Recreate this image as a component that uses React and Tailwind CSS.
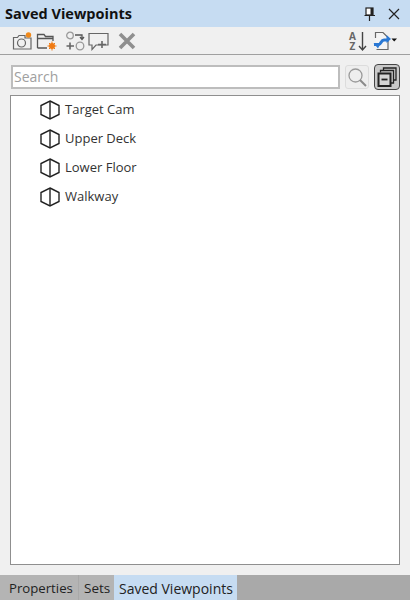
import React from "react";

const Cube = () => (
  <svg width="20" height="20" viewBox="0 0 20 20" fill="none" stroke="#222" strokeWidth="1.4" className="shrink-0">
    <path d="M10 1 L19 5.5 L19 14.5 L10 19 L1 14.5 L1 5.5 Z" strokeLinejoin="miter" />
    <path d="M10 1 V19" />
  </svg>
);

const Row = ({ label }) => (
  <div className="h-[29px] flex items-center pl-[29px] gap-[5px] text-[13px] text-[#333]">
    <Cube />
    <span>{label}</span>
  </div>
);

export default function App() {
  return (
    <div className="w-[410px] h-[600px] flex flex-col bg-[#f0f0f0] overflow-hidden" style={{ fontFamily: '"Open Sans","Noto Sans",sans-serif' }}>
      <div className="h-[27px] shrink-0 bg-[#c6dcf2] flex items-center pl-[5px] pr-[10px]">
        <span className="font-bold text-[14.5px] text-[#111] flex-1">Saved Viewpoints</span>
        <svg width="14" height="16" viewBox="0 0 14 16" className="mr-[11px]">
          <rect x="3" y="2" width="7" height="7" fill="#fff" stroke="#222" strokeWidth="1.2" />
          <rect x="7.5" y="2" width="2.5" height="7" fill="#222" />
          <path d="M1.5 9.5H12M6.5 9.5V15" stroke="#222" strokeWidth="1.2" />
        </svg>
        <svg width="12" height="12" viewBox="0 0 12 12">
          <path d="M1 1L11 11M11 1L1 11" stroke="#222" strokeWidth="1.2" />
        </svg>
      </div>

      <div className="h-[28px] shrink-0 border-b border-[#a0a0a0] flex items-center pl-[12px] pr-[13px]">
        <svg width="21" height="20" viewBox="0 0 21 20" fill="none" className="mr-[3px]">
          <path d="M1.5 6.5H5.5L7 4.5H13V7H19V18H1.5Z" stroke="#666" strokeWidth="1.2" />
          <circle cx="9.5" cy="12" r="4" stroke="#666" strokeWidth="1.2" />
          <circle cx="16.5" cy="4" r="2.7" fill="#f08a1c" />
        </svg>
        <svg width="21" height="20" viewBox="0 0 21 20" fill="none" className="mr-[8px]">
          <path d="M1.5 17V3.5H8L9.5 5.5H17V10M1.5 7.5H17M1.5 17H11" stroke="#555" strokeWidth="1.3" />
          <circle cx="16" cy="15" r="3" fill="#f07a12" />
          <path d="M16 10.5V19.5M11.5 15H20.5M13 12L19 18M19 12L13 18" stroke="#f07a12" strokeWidth="1" />
        </svg>
        <svg width="22" height="20" viewBox="0 0 22 20" fill="none" className="mr-[1px]">
          <circle cx="5" cy="4.5" r="3.3" stroke="#999" strokeWidth="1.3" />
          <circle cx="15" cy="15" r="3.8" stroke="#999" strokeWidth="1.3" />
          <path d="M10 4H17V7M15 6L17 8.5L19 6" stroke="#555" strokeWidth="1.3" />
          <path d="M1.5 15H9M5 11.5V18.5" stroke="#666" strokeWidth="1.6" />
        </svg>
        <svg width="21" height="20" viewBox="0 0 21 20" fill="none" className="mr-[9px]">
          <path d="M1 2.5H20V14H8L4 18.5V14H1Z" stroke="#666" strokeWidth="1.2" />
          <path d="M10 13.5H18M14 10V17" stroke="#666" strokeWidth="1.6" />
        </svg>
        <svg width="18" height="18" viewBox="0 0 18 18" fill="none">
          <path d="M2 2L16 16M16 2L2 16" stroke="#8f8f8f" strokeWidth="3.6" />
        </svg>
        <div className="flex-1" />
        <div className="w-[9px] text-center text-[10px] leading-[10px] font-bold text-[#666] mr-[1px]">
          A<br />Z
        </div>
        <svg width="9" height="22" viewBox="0 0 9 22" fill="none" className="mr-[6px]">
          <path d="M4.5 2V20M1 16L4.5 20L8 16" stroke="#444" strokeWidth="1.4" />
        </svg>
        <svg width="24" height="20" viewBox="0 0 24 20" fill="none">
          <path d="M2.5 7V1.5H10L15 6.5V18.5H3.5" stroke="#666" strokeWidth="1.2" fill="#f4f4f4" />
          <path d="M1 13.5H6C8 13.5 8 9 11 9H15.5" stroke="#2a78d4" strokeWidth="3" />
          <path d="M0.5 12L5 17.5L7.5 12.5Z M13.5 4L18 8L13.5 12Z" fill="#2a78d4" />
          <path d="M18.5 7.5H24L21.2 10.5Z" fill="#111" />
        </svg>
      </div>

      <div className="flex items-center pt-[10px] pl-[11px] pr-[10px]">
        <div className="w-[329px] h-[24px] border-2 border-[#bdbdbd] bg-white flex items-center pl-[1px] pb-[2px] text-[14px] text-[#a0a0a0]">
          Search
        </div>
        <div className="w-[24px] h-[24px] ml-[5px] rounded-[3px] border border-[#dcdcdc] bg-[#eeeeee] flex items-center justify-center">
          <svg width="21" height="21" viewBox="0 0 21 21" fill="none">
            <circle cx="8.5" cy="8.5" r="6.5" stroke="#9a9a9a" strokeWidth="1.3" />
            <path d="M13 13L19 19" stroke="#8a8a8a" strokeWidth="2" />
          </svg>
        </div>
        <div className="w-[26px] h-[26px] -my-[2px] ml-[5px] rounded-[4px] border border-[#444] bg-[#c9c9c9] flex items-center justify-center">
          <svg width="20" height="20" viewBox="0 0 20 20" fill="none" stroke="#222">
            <path d="M6.5 3V1H19V13H17" strokeWidth="1.3" />
            <path d="M3.5 5.5V3.5H16.5V16H14" strokeWidth="1.3" />
            <rect x="1.5" y="6.5" width="12" height="12.5" strokeWidth="2" fill="#d4d4d4" />
            <path d="M4.5 12.5H10.5" strokeWidth="1.8" />
          </svg>
        </div>
      </div>

      <div className="mt-[6px] ml-[10px] w-[390px] h-[470px] shrink-0 bg-white border border-[#8f8f8f]">
        <div className="-mt-[1px]">
          <Row label="Target Cam" />
          <Row label="Upper Deck" />
          <Row label="Lower Floor" />
          <Row label="Walkway" />
        </div>
      </div>

      <div className="mt-[10px] flex-1 bg-[#a9a9a9] flex items-stretch text-[14px] text-[#222]">
        <div className="w-[78px] pl-[9px] pt-[2px] flex items-center bg-[#b4b4b4] text-[13.2px]">Properties</div>
        <div className="w-[36px] pl-[5px] pt-[2px] flex items-center bg-[#b4b4b4] border-l border-[#a9a9a9] text-[13.5px]">Sets</div>
        <div className="w-[123px] pl-[5px] pt-[2px] flex items-center bg-[#c6dcf2] whitespace-nowrap">Saved Viewpoints</div>
      </div>
    </div>
  );
}
